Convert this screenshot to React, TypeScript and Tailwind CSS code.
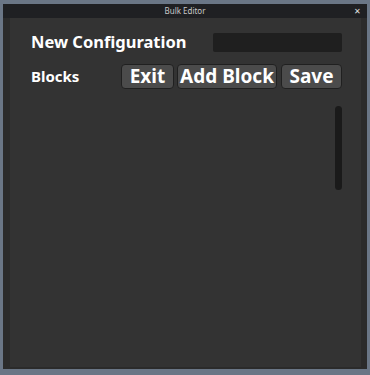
import React from 'react';

const font = { fontFamily: '"Noto Sans", "Open Sans", sans-serif' };

export default function App() {
  return (
    <div className="w-[370px] h-[375px] bg-[#6a7686] pt-[4px] px-[3px]" style={font}>
      <div className="w-[364px] h-[365px] flex flex-col bg-[#2b2b2b]">
        {/* Title bar */}
        <div className="relative h-[14px] bg-[#1f2023] flex items-center justify-center shrink-0">
          <span className="text-[8px] text-[#c8c8c8] leading-none">Bulk Editor</span>
          <span className="absolute right-[6px] top-[3px] text-[8px] text-[#e0e0e0] leading-none">✕</span>
        </div>

        {/* Body */}
        <div className="flex-1 pl-[7px] pr-[6px] pb-[2px]">
          <div className="h-full bg-[#333333] pl-[21px] pr-[19px] pt-[15px]">
            <div className="flex items-center justify-between h-[19px]">
              <span className="text-white font-bold text-[16.5px] leading-none">New Configuration</span>
              <div className="w-[129px] h-[19px] bg-[#1f1f1f] rounded-[2px]" />
            </div>

            <div className="flex items-center justify-between mt-[12px]">
              <span className="text-white font-bold text-[15px] leading-none">Blocks</span>
              <div className="flex gap-[3px]">
                <button className="w-[53px] h-[25px] bg-[#4b4b4b] border border-[#202020] rounded-[4px] text-white font-bold text-[19px] leading-none">
                  Exit
                </button>
                <button className="w-[100px] h-[25px] bg-[#4b4b4b] border border-[#202020] rounded-[4px] text-white font-bold text-[19px] leading-none">
                  Add Block
                </button>
                <button className="w-[61px] h-[25px] ml-[1px] bg-[#4b4b4b] border border-[#202020] rounded-[4px] text-white font-bold text-[19px] leading-none">
                  Save
                </button>
              </div>
            </div>

            <div className="flex justify-end mt-[17px]">
              <div className="w-[7px] h-[84px] bg-[#1a1a1a] rounded-full" />
            </div>
          </div>
        </div>
      </div>
    </div>
  );
}
